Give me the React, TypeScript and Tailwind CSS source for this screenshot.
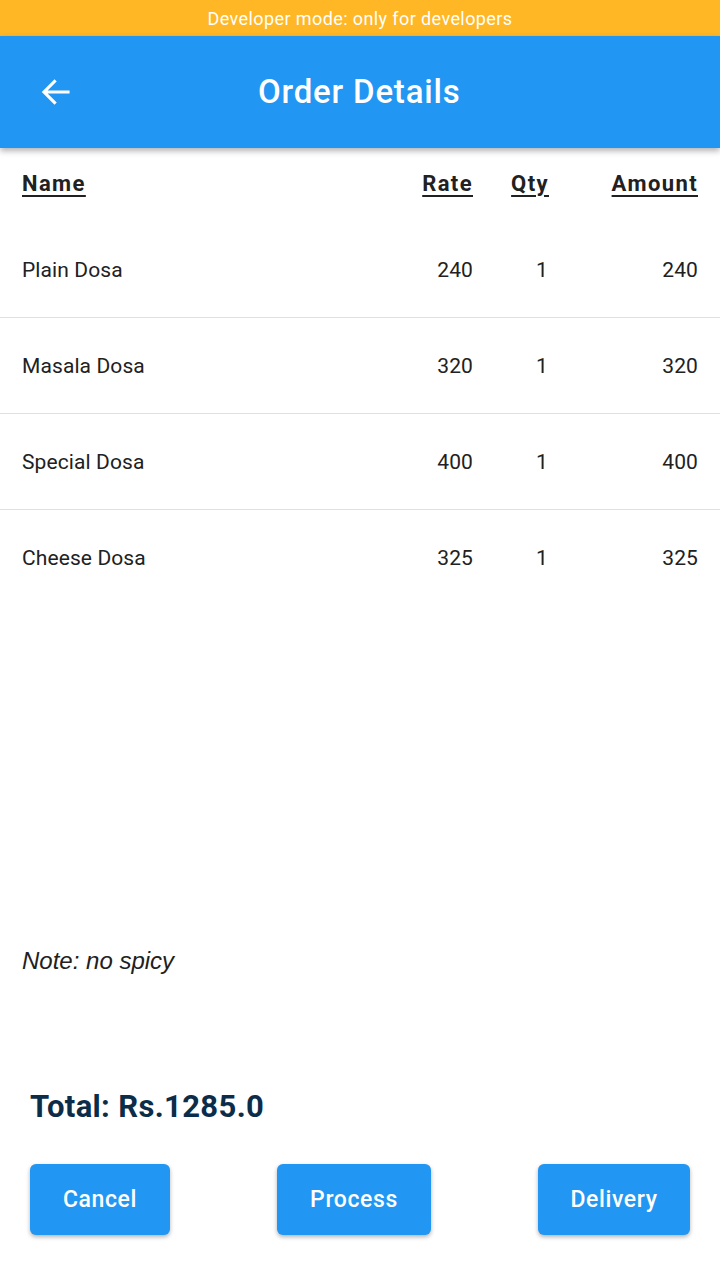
const items = [
  { name: "Plain Dosa", rate: 240, qty: 1, amount: 240 },
  { name: "Masala Dosa", rate: 320, qty: 1, amount: 320 },
  { name: "Special Dosa", rate: 400, qty: 1, amount: 400 },
  { name: "Cheese Dosa", rate: 325, qty: 1, amount: 325 },
];

function BackArrow() {
  return (
    <svg width="36" height="36" viewBox="0 0 24 24" fill="none">
      <path d="M20 12H4.5M11 5l-7 7 7 7" stroke="white" strokeWidth="2.1" strokeLinecap="square" />
    </svg>
  );
}

export default function App() {
  return (
    <div className="flex h-[1280px] w-[720px] flex-col bg-white font-['Roboto',sans-serif]">
      <div className="flex h-[36px] items-center justify-center bg-[#ffb726] text-[18px] tracking-[0.4px] text-white">
        Developer mode: only for developers
      </div>

      <header className="relative z-10 flex h-[112px] items-center bg-[#2196f3] px-[38px] shadow-[0_3px_6px_rgba(0,0,0,0.3)]">
        <BackArrow />
        <h1 className="ml-[184px] text-[33px] font-medium tracking-[0.8px] text-white">Order Details</h1>
      </header>

      <div className="flex h-[74px] items-center px-[22px] pb-[4px] text-[22px] font-bold tracking-[1.4px] text-[#212121] underline underline-offset-[4px]">
        <span className="flex-1">Name</span>
        <span className="w-[80px] text-right">Rate</span>
        <span className="w-[76px] text-right">Qty</span>
        <span className="w-[149px] text-right">Amount</span>
      </div>

      <div className="flex flex-col">
        {items.map((item, i) => (
          <div
            key={item.name}
            className={`flex h-[96px] items-center px-[22px] pt-[2px] text-[21px] tracking-[0.1px] text-[#212121] ${i < items.length - 1 ? "border-b border-[#e0e0e0]" : ""}`}
          >
            <span className="flex-1">{item.name}</span>
            <span className="w-[80px] text-right">{item.rate}</span>
            <span className="w-[75px] text-right">{item.qty}</span>
            <span className="w-[150px] text-right">{item.amount}</span>
          </div>
        ))}
      </div>

      <p className="mt-[337px] px-[22px] font-['Liberation_Sans',sans-serif] text-[24px] italic text-[#212121]">
        Note: no spicy
      </p>

      <p className="mt-[105px] px-[30px] text-[31px] font-bold tracking-[0.35px] text-[#0b2d4a]">Total: Rs.1285.0</p>

      <div className="mt-[33px] flex justify-between px-[30px]">
        <button className="h-[71px] w-[140px] rounded-[6px] bg-[#2196f3] pt-[3px] text-[23px] font-medium tracking-[0.6px] text-white shadow-[0_2px_4px_rgba(0,0,0,0.3)]">
          Cancel
        </button>
        <button className="h-[71px] w-[154px] rounded-[6px] bg-[#2196f3] pt-[3px] text-[23px] font-medium tracking-[0.6px] text-white shadow-[0_2px_4px_rgba(0,0,0,0.3)]">
          Process
        </button>
        <button className="h-[71px] w-[152px] rounded-[6px] bg-[#2196f3] pt-[3px] text-[23px] font-medium tracking-[0.6px] text-white shadow-[0_2px_4px_rgba(0,0,0,0.3)]">
          Delivery
        </button>
      </div>
    </div>
  );
}
